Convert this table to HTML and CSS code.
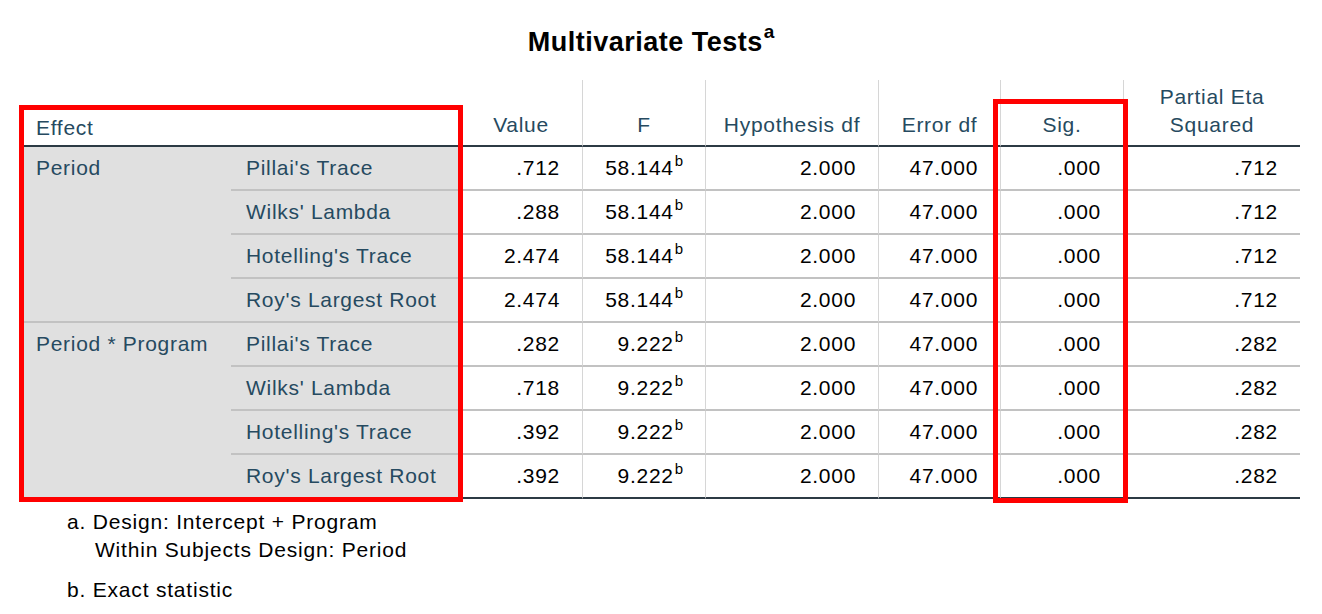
FILE: index.html
```html
<!DOCTYPE html>
<html>
<head>
<meta charset="utf-8">
<link rel="stylesheet" href="styles.css">
</head>
<body>
<div class="page">
  <div class="title-row">
    <div class="title">Multivariate Tests<sup class="title-sup">a</sup></div>
  </div>
  <table class="stats">
    <colgroup>
      <col class="c-effect">
      <col class="c-test">
      <col class="c-value">
      <col class="c-f">
      <col class="c-hyp">
      <col class="c-err">
      <col class="c-sig">
      <col class="c-eta">
    </colgroup>
    <thead>
      <tr>
        <th class="h-label" colspan="2">Effect</th>
        <th class="h-num">Value</th>
        <th class="h-num vl">F</th>
        <th class="h-num vl">Hypothesis df</th>
        <th class="h-num vl">Error df</th>
        <th class="h-num vl">Sig.</th>
        <th class="h-num vl h-two">Partial Eta<br>Squared</th>
      </tr>
    </thead>
    <tbody>
      <tr>
        <td class="lab grp" rowspan="4">Period</td>
        <td class="lab">Pillai's Trace</td>
        <td class="num">.712</td>
        <td class="num vl">58.144<sup class="fn">b</sup></td>
        <td class="num vl">2.000</td>
        <td class="num vl">47.000</td>
        <td class="num vl">.000</td>
        <td class="num vl">.712</td>
      </tr>
      <tr>
        <td class="lab">Wilks' Lambda</td>
        <td class="num">.288</td>
        <td class="num vl">58.144<sup class="fn">b</sup></td>
        <td class="num vl">2.000</td>
        <td class="num vl">47.000</td>
        <td class="num vl">.000</td>
        <td class="num vl">.712</td>
      </tr>
      <tr>
        <td class="lab">Hotelling's Trace</td>
        <td class="num">2.474</td>
        <td class="num vl">58.144<sup class="fn">b</sup></td>
        <td class="num vl">2.000</td>
        <td class="num vl">47.000</td>
        <td class="num vl">.000</td>
        <td class="num vl">.712</td>
      </tr>
      <tr>
        <td class="lab">Roy's Largest Root</td>
        <td class="num">2.474</td>
        <td class="num vl">58.144<sup class="fn">b</sup></td>
        <td class="num vl">2.000</td>
        <td class="num vl">47.000</td>
        <td class="num vl">.000</td>
        <td class="num vl">.712</td>
      </tr>
      <tr>
        <td class="lab grp last" rowspan="4">Period * Program</td>
        <td class="lab">Pillai's Trace</td>
        <td class="num">.282</td>
        <td class="num vl">9.222<sup class="fn">b</sup></td>
        <td class="num vl">2.000</td>
        <td class="num vl">47.000</td>
        <td class="num vl">.000</td>
        <td class="num vl">.282</td>
      </tr>
      <tr>
        <td class="lab">Wilks' Lambda</td>
        <td class="num">.718</td>
        <td class="num vl">9.222<sup class="fn">b</sup></td>
        <td class="num vl">2.000</td>
        <td class="num vl">47.000</td>
        <td class="num vl">.000</td>
        <td class="num vl">.282</td>
      </tr>
      <tr>
        <td class="lab">Hotelling's Trace</td>
        <td class="num">.392</td>
        <td class="num vl">9.222<sup class="fn">b</sup></td>
        <td class="num vl">2.000</td>
        <td class="num vl">47.000</td>
        <td class="num vl">.000</td>
        <td class="num vl">.282</td>
      </tr>
      <tr class="last-row">
        <td class="lab">Roy's Largest Root</td>
        <td class="num">.392</td>
        <td class="num vl">9.222<sup class="fn">b</sup></td>
        <td class="num vl">2.000</td>
        <td class="num vl">47.000</td>
        <td class="num vl">.000</td>
        <td class="num vl">.282</td>
      </tr>
    </tbody>
  </table>
  <div class="notes">
    <div class="note">a. Design: Intercept + Program</div>
    <div class="note note-indent">Within Subjects Design: Period</div>
    <div class="note note-b">b. Exact statistic</div>
  </div>
  <div class="mark mark-effect"></div>
  <div class="mark mark-sig"></div>
</div>
</body>
</html>
```

FILE: styles.css
```css
html, body {
  margin: 0;
  padding: 0;
  background: #ffffff;
}

.page {
  position: relative;
  width: 1322px;
  height: 614px;
  padding-left: 20px;
  box-sizing: border-box;
  font-family: "Liberation Sans", Arial, sans-serif;
  font-size: 21px;
  letter-spacing: 0.7px;
  color: #000;
  overflow: hidden;
}

.title-row {
  width: 1280px;
  height: 80px;
  display: flex;
  justify-content: center;
  align-items: flex-start;
}

.title {
  margin-top: 26px;
  font-weight: bold;
  font-size: 27px;
  letter-spacing: 0.5px;
  line-height: 32px;
  color: #000;
  padding-right: 18px;
}

.title-sup {
  font-size: 19px;
  letter-spacing: 0;
  vertical-align: 0;
  position: relative;
  top: -13px;
  margin-left: 1px;
}

.stats {
  width: 1280px;
  table-layout: fixed;
  border-collapse: separate;
  border-spacing: 0;
}

.c-effect { width: 211px; }
.c-test { width: 229px; }
.c-value { width: 122px; }
.c-f { width: 123px; }
.c-hyp { width: 173px; }
.c-err { width: 122px; }
.c-sig { width: 123px; }
.c-eta { width: 177px; }

.stats th {
  font-weight: normal;
  color: #264a60;
  line-height: 28px;
  padding: 0 0 6px 0;
  vertical-align: bottom;
  border-bottom: 2px solid #2c3a44;
  white-space: nowrap;
}

.h-label {
  text-align: left;
  padding-left: 16px !important;
  padding-bottom: 3px !important;
}

.h-num {
  text-align: center;
}

.h-two {
  padding-top: 3px !important;
}

.vl {
  border-left: 1px solid #d6d6d6;
}

.stats td {
  line-height: 42px;
  padding: 0;
  border-bottom: 2px solid #c2c2c2;
  white-space: nowrap;
  vertical-align: top;
}

.lab {
  background: #e0e0e0;
  color: #264a60;
  text-align: left;
  padding-left: 15px !important;
}

.grp {
  padding-left: 16px !important;
}

.num {
  text-align: right;
  padding-right: 22px !important;
  color: #000;
}

.stats td.last,
.last-row td {
  border-bottom: 2px solid #2c3a44;
}

.fn {
  font-size: 15px;
  letter-spacing: 0;
  line-height: 0;
  vertical-align: 0;
  position: relative;
  top: -9px;
  margin-left: 1px;
}

.notes {
  padding-left: 47px;
  padding-top: 9px;
}

.note {
  line-height: 28px;
  color: #000;
  letter-spacing: 0.8px;
}

.note-indent {
  padding-left: 28px;
}

.note-b {
  margin-top: 12px;
}

.mark {
  position: absolute;
  border: 5px solid #ff0000;
  box-sizing: border-box;
}

.mark-effect {
  left: 19px;
  top: 105px;
  width: 444px;
  height: 397px;
}

.mark-sig {
  left: 993px;
  top: 99px;
  width: 135px;
  height: 404px;
}
```
